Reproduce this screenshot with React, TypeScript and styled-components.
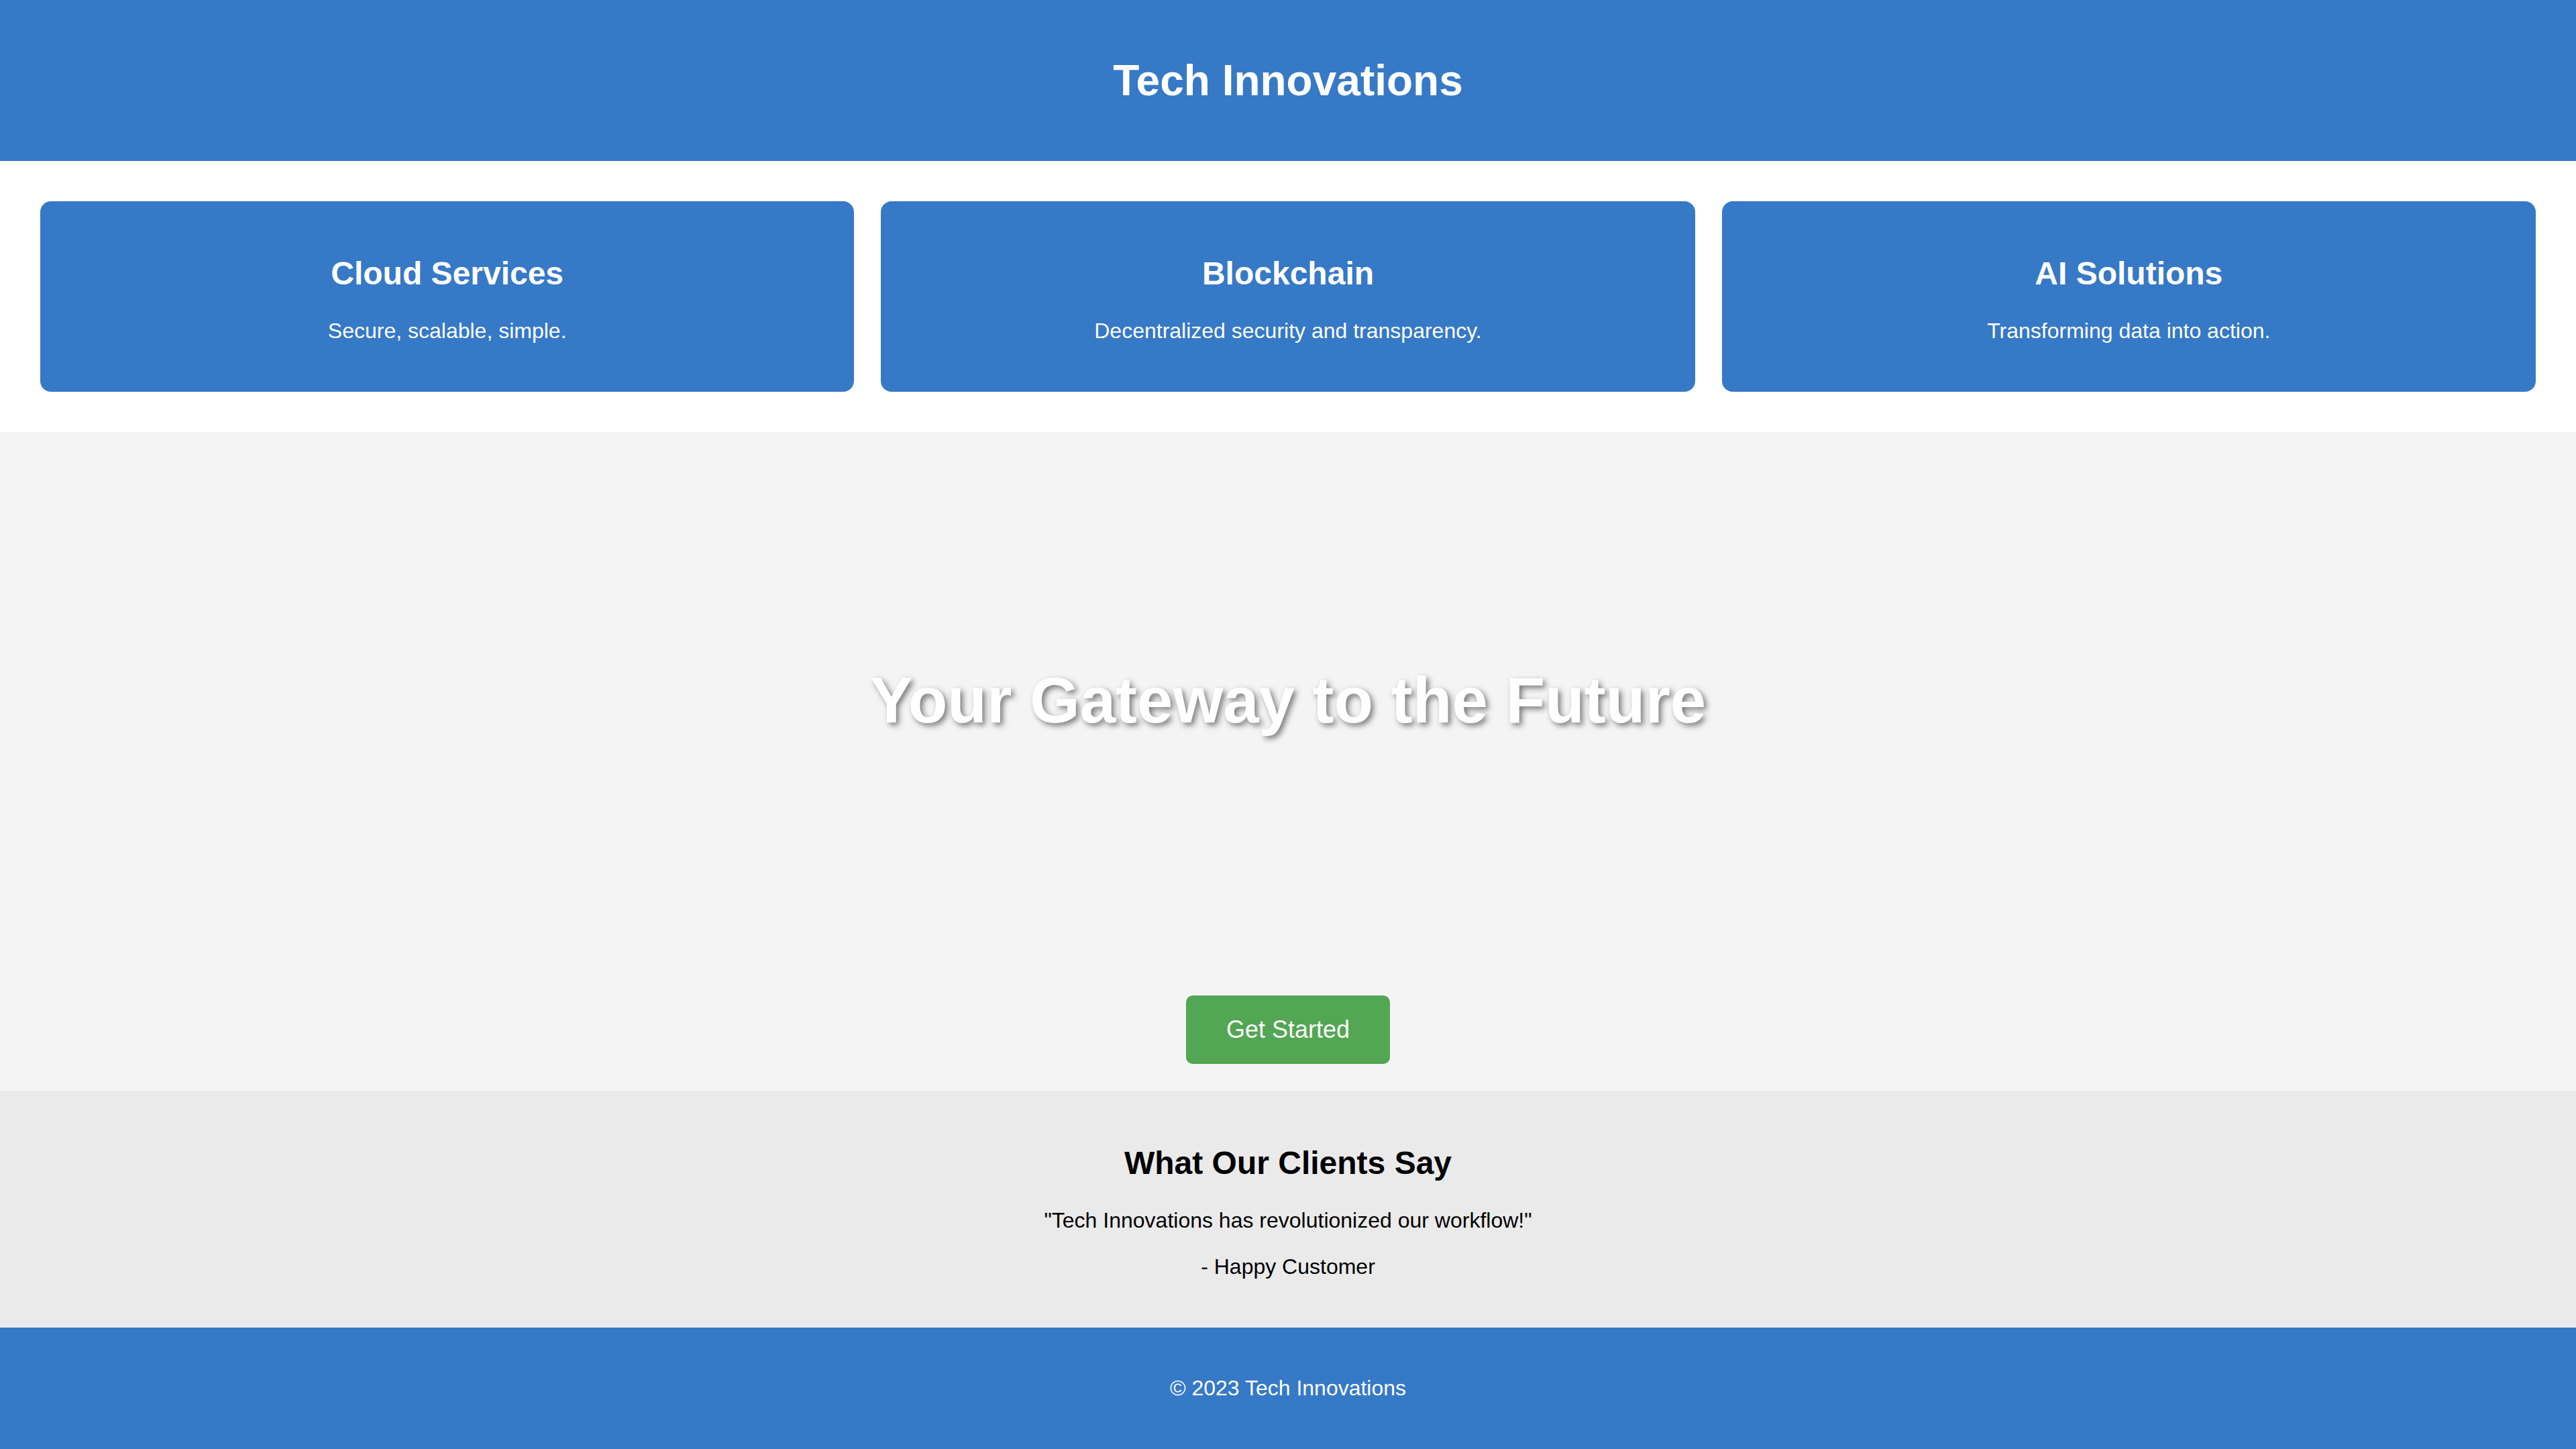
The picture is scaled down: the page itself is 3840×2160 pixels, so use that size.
import styled, { createGlobalStyle } from "styled-components";

const BLUE = "#3679c6";

const GlobalStyle = createGlobalStyle`
  body {
    margin: 0;
    font-family: "Liberation Sans", Arial, sans-serif;
    background: #f4f4f4;
    color: #000;
  }
`;

const Header = styled.header`
  background: ${BLUE};
  color: #fff;
  text-align: center;
  padding: 40px 0;
  h1 {
    font-size: 64px;
    margin: 43px 0;
  }
`;

const Features = styled.section`
  background: #fff;
  padding: 60px;
  display: grid;
  grid-template-columns: repeat(3, 1fr);
  gap: 40px;
`;

const Card = styled.div`
  background: ${BLUE};
  color: #fff;
  border-radius: 16px;
  padding: 40px;
  text-align: center;
  h2 {
    font-size: 48px;
    margin: 40px 0;
  }
  p {
    font-size: 32px;
    margin: 32px 0;
  }
`;

const Hero = styled.section`
  height: 800px;
  display: flex;
  align-items: center;
  justify-content: center;
  h1 {
    margin: 0;
    font-size: 96px;
    color: #fff;
    text-shadow: 4px 4px 8px rgba(0, 0, 0, 0.5);
  }
`;

const Cta = styled.div`
  padding: 40px 0;
  display: flex;
  justify-content: center;
`;

const Button = styled.button`
  background: #53a653;
  color: #fff;
  border: none;
  border-radius: 10px;
  padding: 30px 60px;
  font-family: inherit;
  font-size: 36px;
  cursor: pointer;
`;

const Testimonials = styled.section`
  background: #eaeaea;
  padding: 40px 0;
  text-align: center;
  h2 {
    font-size: 48px;
    margin: 40px 0;
  }
  p {
    font-size: 32px;
    margin: 32px 0;
  }
`;

const Footer = styled.footer`
  background: ${BLUE};
  color: #fff;
  text-align: center;
  padding: 40px 0;
  p {
    font-size: 32px;
    margin: 32px 0;
  }
`;

const features = [
  { title: "Cloud Services", text: "Secure, scalable, simple." },
  { title: "Blockchain", text: "Decentralized security and transparency." },
  { title: "AI Solutions", text: "Transforming data into action." },
];

export default function App() {
  return (
    <>
      <GlobalStyle />
      <Header>
        <h1>Tech Innovations</h1>
      </Header>
      <Features>
        {features.map((f) => (
          <Card key={f.title}>
            <h2>{f.title}</h2>
            <p>{f.text}</p>
          </Card>
        ))}
      </Features>
      <Hero>
        <h1>Your Gateway to the Future</h1>
      </Hero>
      <Cta>
        <Button>Get Started</Button>
      </Cta>
      <Testimonials>
        <h2>What Our Clients Say</h2>
        <p>"Tech Innovations has revolutionized our workflow!"</p>
        <p>- Happy Customer</p>
      </Testimonials>
      <Footer>
        <p>© 2023 Tech Innovations</p>
      </Footer>
    </>
  );
}
